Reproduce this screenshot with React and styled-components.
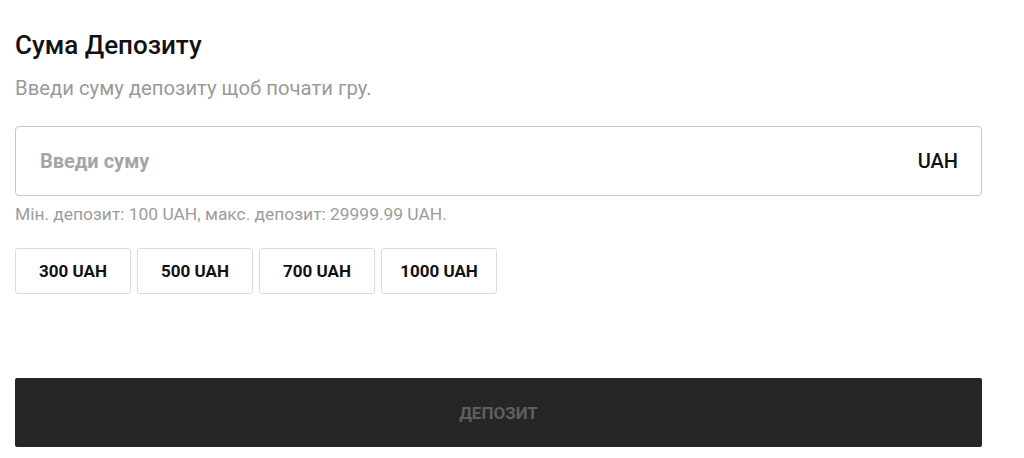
import React from "react";
import styled, { createGlobalStyle } from "styled-components";

const GlobalStyle = createGlobalStyle`
  * { box-sizing: border-box; }
  body {
    margin: 0;
    background: #ffffff;
    font-family: Roboto, "Liberation Sans", Arial, sans-serif;
  }
`;

const Container = styled.div`
  width: 1024px;
  height: 458px;
  padding: 29px 42px 0 15px;
  display: flex;
  flex-direction: column;
`;

const Title = styled.h2`
  margin: 0;
  font-size: 26px;
  line-height: 32px;
  font-weight: 500;
  color: #111;
`;

const Subtitle = styled.p`
  margin: 14px 0 0;
  font-size: 20.3px;
  line-height: 26px;
  color: #9a9a9a;
`;

const Field = styled.div`
  margin-top: 25px;
  height: 70px;
  border: 1px solid #c8c8c8;
  border-radius: 4px;
  display: flex;
  align-items: center;
  justify-content: space-between;
  padding: 0 23px 0 24px;
`;

const Input = styled.input`
  all: unset;
  flex: 1;
  font-size: 20px;
  font-weight: 700;
  color: #222;
  &::placeholder {
    color: #a4a5ab;
  }
`;

const Currency = styled.span`
  font-size: 20px;
  font-weight: 500;
  color: #111;
`;

const Hint = styled.p`
  margin: 7px 0 0;
  font-size: 17.4px;
  line-height: 22px;
  color: #9c9c9c;
`;

const Presets = styled.div`
  margin-top: 23px;
  display: flex;
  gap: 6px;
`;

const Preset = styled.button`
  all: unset;
  box-sizing: border-box;
  width: 116px;
  height: 46px;
  display: flex;
  align-items: center;
  justify-content: center;
  border: 1px solid #dcdcdc;
  border-radius: 3px;
  font-size: 17px;
  font-weight: 700;
  color: #111;
  cursor: pointer;
`;

const Submit = styled.button`
  all: unset;
  box-sizing: border-box;
  margin-top: 84px;
  height: 69px;
  display: flex;
  align-items: center;
  justify-content: center;
  background-color: #262626;
  border-radius: 2px;
  font-size: 17px;
  font-weight: 700;
  color: #5f5f5f;
  text-transform: uppercase;
`;

const amounts = [300, 500, 700, 1000];

const App = () => {
  return (
    <>
      <GlobalStyle />
      <Container>
        <Title>Сума Депозиту</Title>
        <Subtitle>Введи суму депозиту щоб почати гру.</Subtitle>
        <Field>
          <Input placeholder="Введи суму" />
          <Currency>UAH</Currency>
        </Field>
        <Hint>Мін. депозит: 100 UAH, макс. депозит: 29999.99 UAH.</Hint>
        <Presets>
          {amounts.map(a => (
            <Preset key={a}>{a} UAH</Preset>
          ))}
        </Presets>
        <Submit>Депозит</Submit>
      </Container>
    </>
  );
};

export default App;
